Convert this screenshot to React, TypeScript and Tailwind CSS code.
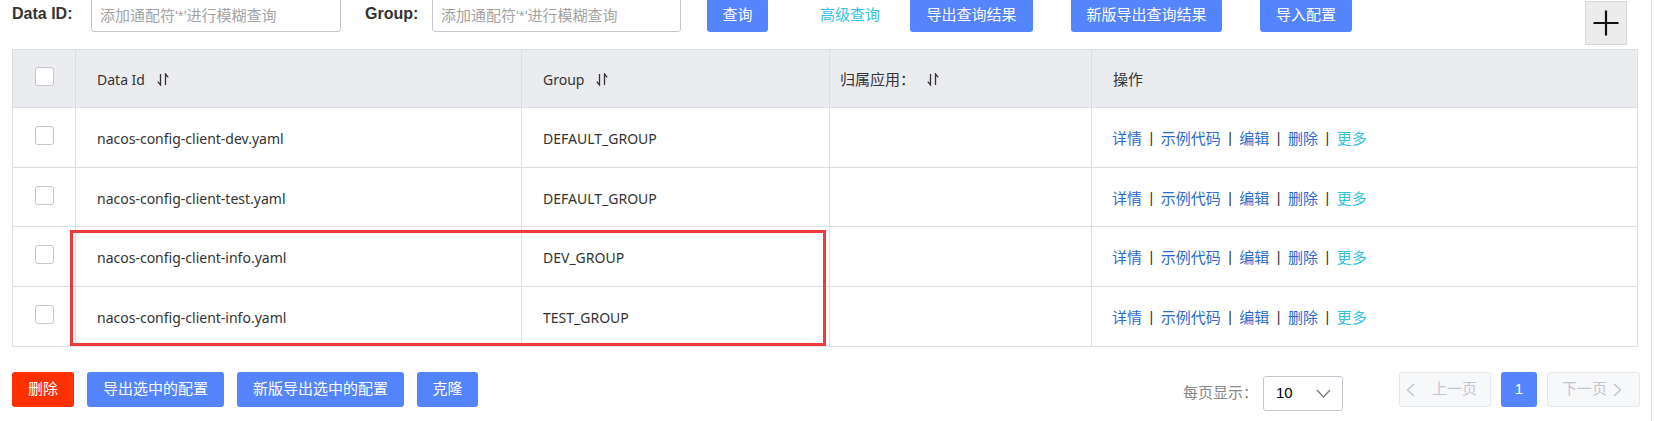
import { Fragment } from "react";

type ConfigRow = {
  dataId: string;
  group: string;
  height: string;
};

const rows: ConfigRow[] = [
  { dataId: "nacos-config-client-dev.yaml", group: "DEFAULT_GROUP", height: "h-[60px]" },
  { dataId: "nacos-config-client-test.yaml", group: "DEFAULT_GROUP", height: "h-[59px]" },
  { dataId: "nacos-config-client-info.yaml", group: "DEV_GROUP", height: "h-[60px]" },
  { dataId: "nacos-config-client-info.yaml", group: "TEST_GROUP", height: "h-[60px]" }
];

const ops = ["详情", "示例代码", "编辑", "删除"];

const cols = "grid grid-cols-[62px_446px_308px_262px_548px]";

function SortIcon() {
  return (
    <svg width="12" height="13" viewBox="0 0 12 13" fill="none" stroke="#333" strokeWidth="1.3" className="ml-[12px]" aria-hidden="true">
      <path d="M3.5 1v11L0.8 8.6" />
      <path d="M8.5 12V1l2.7 3.4" />
    </svg>
  );
}

function Checkbox() {
  return <span className="mb-[4px] block h-[19px] w-[19px] rounded-[3px] border border-[#c4c6cf] bg-white" />;
}

function SearchInput() {
  return (
    <input
      readOnly
      placeholder="添加通配符'*'进行模糊查询"
      className="h-[34px] w-full rounded-[3px] border border-[#c4c6cf] bg-white px-[8px] text-[15px] outline-none placeholder:text-[#a3a3a3]"
    />
  );
}

function Chevron({ dir }: { dir: "left" | "right" }) {
  return (
    <svg width="9" height="14" viewBox="0 0 9 14" fill="none" stroke="#c4c6cf" strokeWidth="1.6" aria-hidden="true">
      {dir === "left" ? <path d="M8 1 1.5 7 8 13" /> : <path d="M1 1l6.5 6L1 13" />}
    </svg>
  );
}

export default function App() {
  return (
    <div className="flex h-[421px] w-[1654px] overflow-hidden bg-white font-['Liberation_Sans','Noto_Sans_CJK_SC',sans-serif] text-[14px] text-[#333]">
      <div className="w-[1652px] border-r border-[#dcdcdc]">
        {/* search bar */}
        <div className="flex h-[49px] items-start pl-[12px]">
          <div className="-mt-[2px] flex h-[34px] items-center">
            <span className="-mt-[2px] w-[79px] text-[16px] font-bold">Data ID:</span>
            <div className="w-[250px]">
              <SearchInput />
            </div>
            <span className="-mt-[2px] ml-[24px] w-[67px] text-[16px] font-bold">Group:</span>
            <div className="w-[249px]">
              <SearchInput />
            </div>
            <button className="ml-[26px] h-[34px] w-[61px] rounded-[3px] bg-[#5584ff] text-[15px] text-white">查询</button>
            <span className="ml-[52px] w-[60px] text-[15px] text-[#36c3e3]">高级查询</span>
            <button className="ml-[30px] h-[34px] w-[123px] rounded-[3px] bg-[#5584ff] text-[15px] text-white">导出查询结果</button>
            <button className="ml-[38px] h-[34px] w-[151px] rounded-[3px] bg-[#5584ff] text-[15px] text-white">新版导出查询结果</button>
            <button className="ml-[38px] h-[34px] w-[92px] rounded-[3px] bg-[#5584ff] text-[15px] text-white">导入配置</button>
          </div>
          <div className="ml-[233px] mt-[1px] flex h-[44px] w-[42px] items-center justify-center border border-[#d9d9d9] bg-[#ececec]">
            <svg width="26" height="26" viewBox="0 0 26 26" stroke="#111" strokeWidth="2.2" aria-hidden="true">
              <path d="M13 0.5v25M0.5 13h25" />
            </svg>
          </div>
        </div>

        {/* table */}
        <div className="relative ml-[12px] w-[1626px] border-x border-[#dcdee3] font-['Noto_Sans','Noto_Sans_CJK_SC',sans-serif]">
          <div className={`${cols} h-[59px] border-y border-[#dcdee3] bg-[#ebecf0]`}>
            <div className="flex items-center justify-center">
              <Checkbox />
            </div>
            <div className="flex items-center border-l border-[#dcdee3] pl-[21px] pt-[1px]">
              Data Id
              <SortIcon />
            </div>
            <div className="flex items-center border-l border-[#dcdee3] pl-[21px] pt-[1px]">
              Group
              <SortIcon />
            </div>
            <div className="flex items-center border-l border-[#dcdee3] pl-[10px] pt-[1px] text-[15px]">
              归属应用：
              <SortIcon />
            </div>
            <div className="flex items-center border-l border-[#dcdee3] pl-[21px] pt-[1px] text-[15px]">操作</div>
          </div>

          {rows.map((row, i) => (
            <div key={i} className={`${cols} ${row.height} border-b border-[#dcdee3]`}>
              <div className="flex items-center justify-center">
                <Checkbox />
              </div>
              <div className="flex items-center border-l border-[#dcdee3] pl-[21px] pt-[2px]">{row.dataId}</div>
              <div className="flex items-center border-l border-[#dcdee3] pl-[21px] pt-[2px]">{row.group}</div>
              <div className="border-l border-[#dcdee3]" />
              <div className="flex items-center border-l border-[#dcdee3] pl-[20px] pt-[2px] text-[15px]">
                {ops.map((op) => (
                  <Fragment key={op}>
                    <span className="text-[#2b6bd0]">{op}</span>
                    <span className="mx-[7.5px] font-['Liberation_Sans'] text-[14px] text-[#333]">|</span>
                  </Fragment>
                ))}
                <span className="text-[#36c3e3]">更多</span>
              </div>
            </div>
          ))}

          {/* highlight annotation */}
          <div className="absolute left-[57px] top-[181px] h-[116px] w-[756px] border-[3px] border-[#ee3a3a]" />
        </div>

        {/* footer */}
        <div className="mt-[25px] flex items-start pl-[12px] text-[15px]">
          <button className="h-[35px] w-[62px] rounded-[3px] bg-[#ff3000] text-white">删除</button>
          <button className="ml-[13px] h-[35px] w-[137px] rounded-[3px] bg-[#5584ff] text-white">导出选中的配置</button>
          <button className="ml-[13px] h-[35px] w-[167px] rounded-[3px] bg-[#5584ff] text-white">新版导出选中的配置</button>
          <button className="ml-[13px] h-[35px] w-[61px] rounded-[3px] bg-[#5584ff] text-white">克隆</button>

          <div className="ml-[705px] mt-[4px] flex h-[35px] items-center">
            <span className="w-[80px] text-[#888]">每页显示：</span>
            <div className="flex h-[35px] w-[80px] items-center justify-between rounded-[3px] border border-[#c4c6cf] pl-[12px] pr-[11px] text-black">
              10
              <svg width="15" height="9" viewBox="0 0 15 9" fill="none" stroke="#777" strokeWidth="1.3" aria-hidden="true">
                <path d="M1 1l6.5 7L14 1" />
              </svg>
            </div>
          </div>

          <button className="ml-[56px] flex h-[35px] w-[92px] items-center rounded-[3px] border border-[#e6e7eb] bg-[#f7f8fa] pl-[6px] text-[#c4c6cf]">
            <Chevron dir="left" />
            <span className="ml-[17px]">上一页</span>
          </button>
          <button className="ml-[10px] h-[35px] w-[36px] rounded-[3px] bg-[#5584ff] text-white">1</button>
          <button className="ml-[10px] flex h-[35px] w-[93px] items-center rounded-[3px] border border-[#e6e7eb] bg-[#f7f8fa] pl-[14px] text-[#c4c6cf]">
            <span>下一页</span>
            <span className="ml-[6px]">
              <Chevron dir="right" />
            </span>
          </button>
        </div>
      </div>
    </div>
  );
}
